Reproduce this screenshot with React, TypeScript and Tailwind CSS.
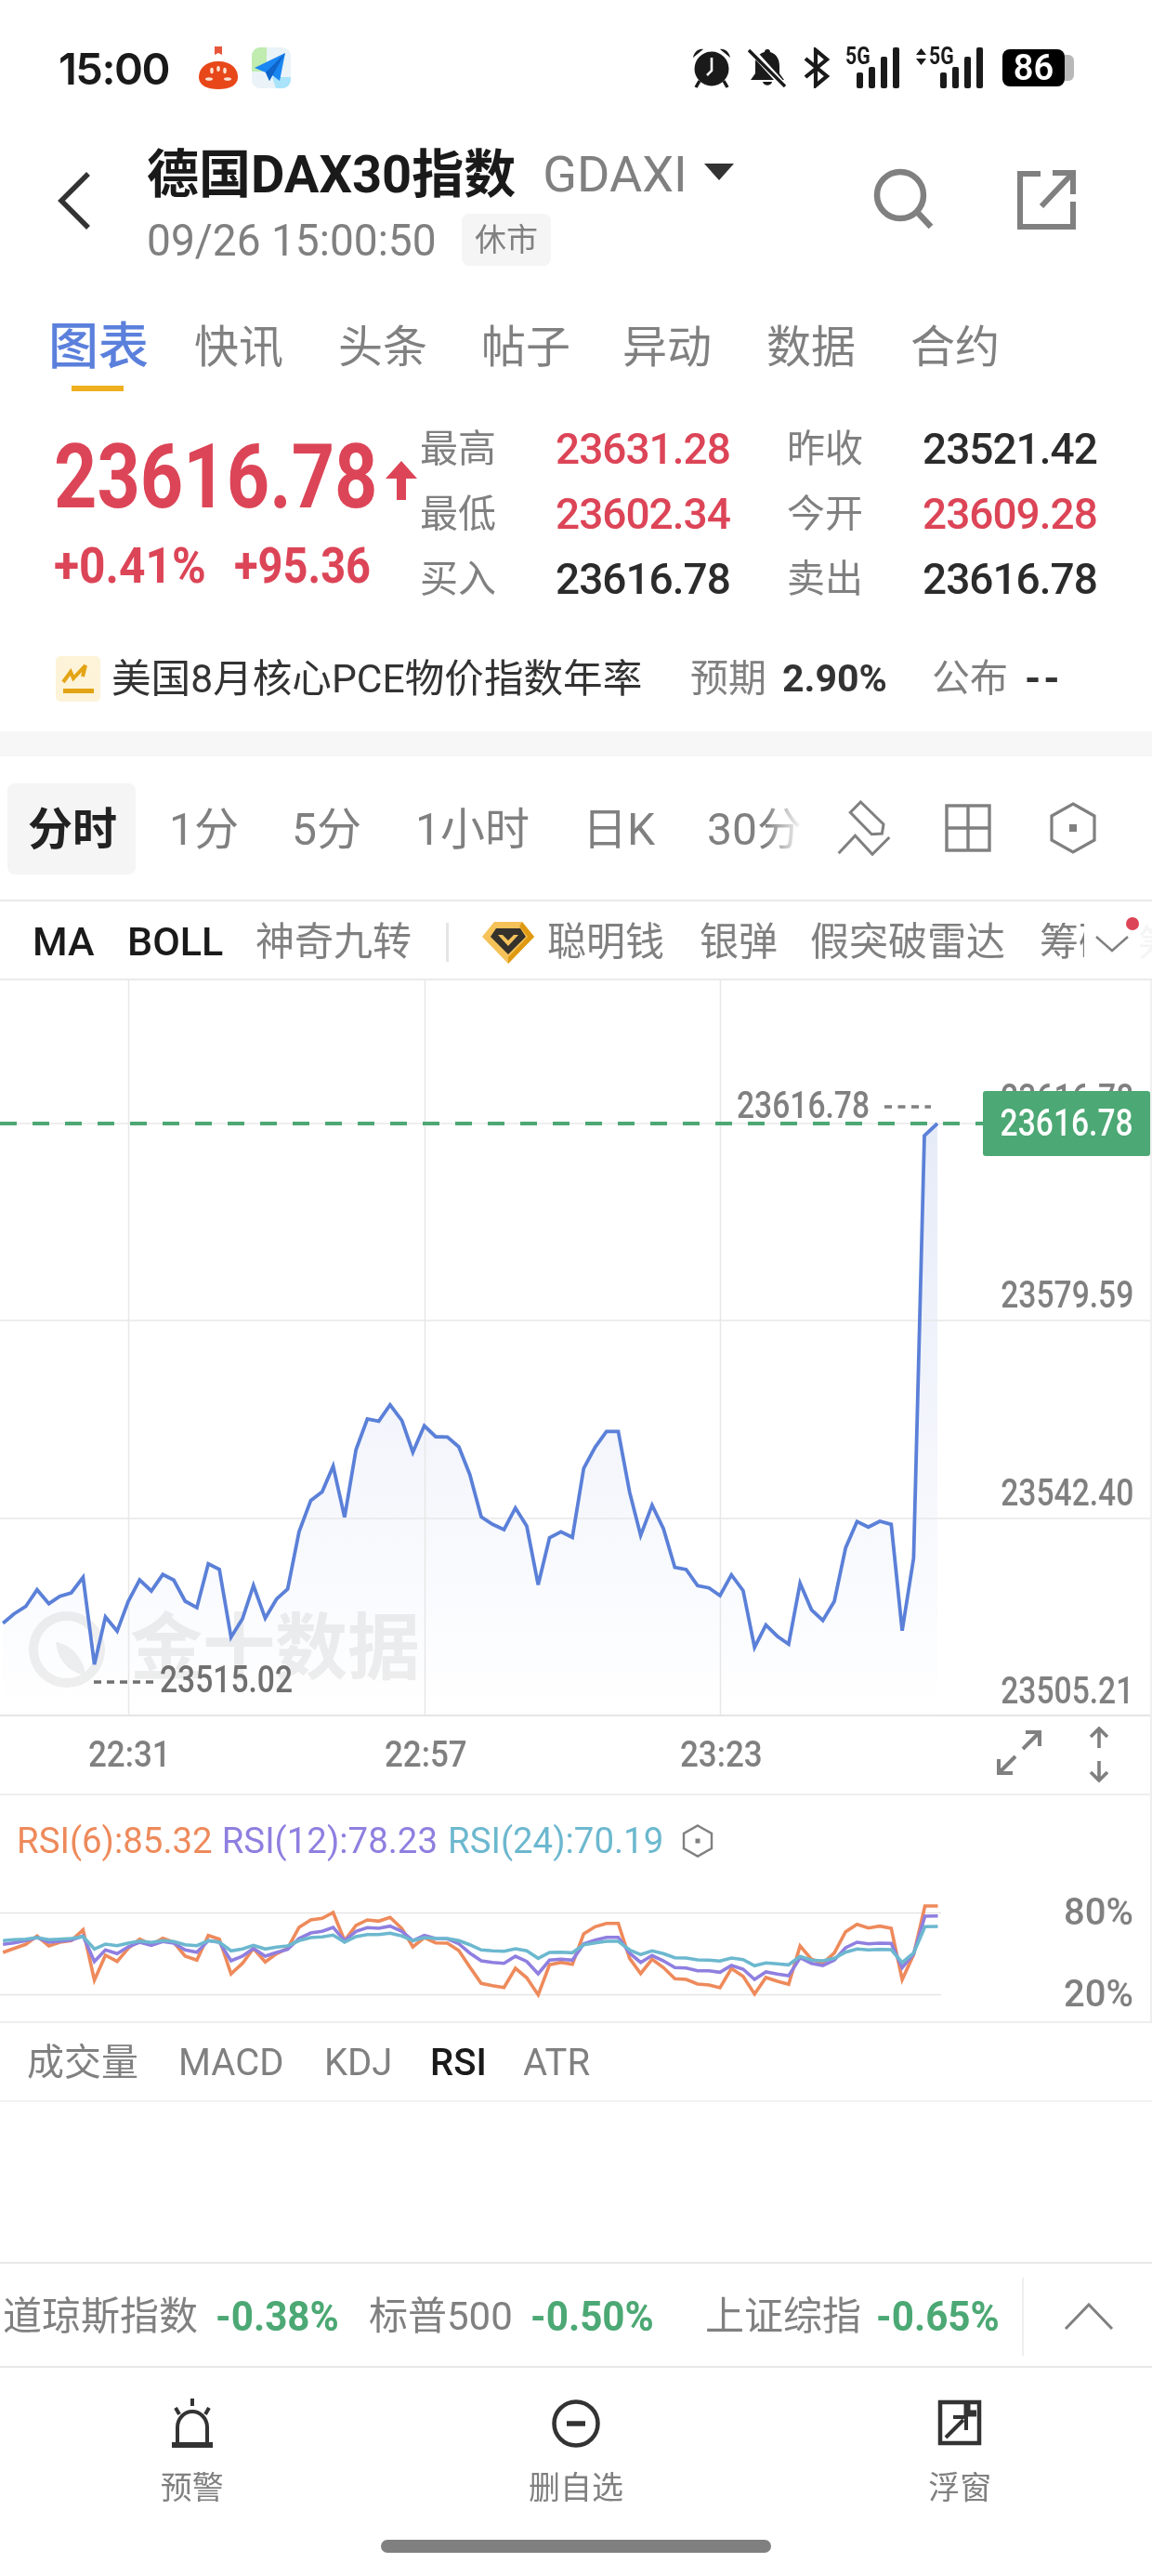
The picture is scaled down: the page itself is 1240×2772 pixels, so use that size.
import React from "react";

const P1: [number, number][] = [[8,860],[38,830],[70,806],[101,752],[133,797],[163,773],[194,762],[226,712],[257,993],[287,840],[319,886],[349,790],[380,720],[412,756],[443,703],[473,721],[504,789],[536,810],[567,668],[597,686],[629,905],[660,846],[690,738],[722,844],[753,782],[783,750],[814,565],[846,464],[877,436],[907,353],[938,518],[969,300],[1000,201],[1031,208],[1062,155],[1094,206],[1124,308],[1155,223],[1186,258],[1218,259],[1249,291],[1279,380],[1310,517],[1341,541],[1372,558],[1403,488],[1434,547],[1465,736],[1496,584],[1527,565],[1558,583]];
const P2: [number, number][] = [[21,360],[52,292],[83,241],[115,241],[146,437],[176,577],[207,479],[238,555],[269,680],[300,687],[331,739],[362,746],[392,771],[423,704],[455,755],[486,938],[517,866],[548,902],[579,928],[610,731],[641,817],[672,851],[703,790],[734,617],[765,532],[796,550],[827,531],[858,541],[888,884],[919,650]];
const price: [number, number][] = [
  ...P1.map(([x, y]) => [x / 2.529, 1460 + y / 3] as [number, number]),
  ...P2.map(([x, y]) => [620 + x / 2.529, 1460 + y / 3] as [number, number]),
  [995, 1222],
  [1009, 1209],
];
const xs1 = P1.map((p) => p[0]);
const xs2 = [...P2.map((p) => p[0]), 950, 985];
const series = (a: number[], b: number[]) => [
  ...a.map((y, i) => `${(xs1[i] / 2.529).toFixed(1)},${(1920 + y / 3).toFixed(1)}`),
  ...b.map((y, i) => `${(620 + xs2[i] / 2.529).toFixed(1)},${(1920 + y / 3).toFixed(1)}`),
].join(" ");
const orange = series(
  [543,530,517,490,522,510,505,470,632,552,572,530,500,518,497,510,555,568,488,500,612,578,530,574,547,530,462,438,433,414,505,456,438,442,430,466,525,495,512,513,537,590,643,650,656,594,625,680,583,575,581],
  [483,460,449,449,562,611,565,592,628,630,645,648,657,595,620,677,624,636,646,522,565,578,545,476,452,464,458,465,631,550,393,393]
);
const purple = series(
  [517,512,505,495,510,507,503,490,572,535,547,525,510,520,508,513,535,542,505,510,570,555,530,555,543,533,498,480,475,462,505,475,463,465,458,475,505,488,498,499,515,545,570,575,578,555,572,612,568,565,568],
  [515,503,494,494,545,575,553,570,592,593,602,602,607,585,597,630,606,613,618,560,578,585,568,528,510,515,513,514,592,548,426,425]
);
const teal = series(
  [505,502,500,495,502,500,498,492,532,516,521,513,506,511,505,508,518,521,505,510,538,532,520,532,526,522,505,495,493,487,510,492,485,485,481,490,505,495,498,498,505,518,535,538,539,531,538,562,543,542,544],
  [518,512,507,507,535,550,538,547,560,561,567,568,571,561,566,586,577,580,583,556,568,570,562,542,532,535,533,534,576,545,460,459]
);
const line = price.map(([x, y]) => `${x.toFixed(1)},${y.toFixed(1)}`).join(" ");
const area = `${line} 1009,1846 3,1846`;

function Row({ label, value, red }: { label: string; value: string; red?: boolean }) {
  return (
    <div className="flex items-center">
      <span className="w-[146px] text-[41px] leading-none text-[#808080]">{label}</span>
      <span className={`w-[190px] text-[46px] leading-none font-medium tracking-[-1px] ${red ? "text-[#dc4557]" : "text-[#2b2b2b]"}`}>{value}</span>
    </div>
  );
}

function Alarm() {
  return (
    <svg width="44" height="44" viewBox="0 0 44 44" fill="#1a1a1a">
      <circle cx="22" cy="23" r="18.5" />
      <path d="M2 11 C3 5 8 1 13 2 Z M42 11 C41 5 36 1 31 2 Z" />
      <path d="M9 36 L5 43 M35 36 L39 43" stroke="#1a1a1a" strokeWidth="3.5" />
      <path d="M22 11 V25 L17 30" stroke="#fff" strokeWidth="2.6" fill="none" />
    </svg>
  );
}
function BellOff() {
  return (
    <svg width="42" height="42" viewBox="0 0 42 42" fill="#1a1a1a">
      <path d="M21 1 a3 3 0 0 1 3 3 C31 6 34 12 34 19 V27 L39 34 H3 L8 27 V15 C8 10 13 5 18 4 a3 3 0 0 1 3-3Z" />
      <path d="M16 36 H26 C25 41 17 41 16 36Z" />
      <path d="M2 0 L40 42" stroke="#fff" strokeWidth="7" />
      <path d="M1 2 L40 41" stroke="#1a1a1a" strokeWidth="3.4" />
    </svg>
  );
}
function Bluetooth() {
  return (
    <svg width="28" height="44" viewBox="0 0 28 44" fill="none" stroke="#1a1a1a" strokeWidth="4.2">
      <path d="M2 12 L25 31 L13 41 V3 L25 13 L2 32" />
    </svg>
  );
}
function Signal({ arrows }: { arrows?: boolean }) {
  return (
    <div className="relative h-[44px] w-[58px] shrink-0">
      <svg className="absolute bottom-0 right-0" width="46" height="44" viewBox="0 0 46 44" fill="#1a1a1a">
        <rect x="0" y="27" width="7" height="17" rx="2" />
        <rect x="13" y="21" width="7" height="23" rx="2" />
        <rect x="26" y="10" width="7" height="34" rx="2" />
        <rect x="39" y="0" width="7" height="44" rx="2" />
      </svg>
      <span className="absolute left-0 top-[-3px] origin-left scale-x-[0.85] text-[25px] leading-[26px] font-bold text-[#1a1a1a]">5G</span>
      {arrows && (
        <svg className="absolute left-[-14px] top-[1px]" width="11" height="18" viewBox="0 0 11 18" fill="#1a1a1a">
          <path d="M5.5 0 L11 7 H0Z M0 11 H11 L5.5 18Z" />
        </svg>
      )}
    </div>
  );
}
function Tomato() {
  return (
    <svg width="44" height="46" viewBox="0 0 44 46">
      <path d="M18 0 H26 V9 L22 7 L18 9Z" fill="#e8573a" />
      <path d="M22 16 C36 16 43 24 43 33 C43 42 34 46 22 46 C10 46 1 42 1 33 C1 24 8 16 22 16Z" fill="#e8471a" />
      <g fill="#fde3d4">
        <ellipse cx="12" cy="35" rx="4" ry="1.8" />
        <ellipse cx="32" cy="35" rx="4" ry="1.8" />
        <ellipse cx="15" cy="26" rx="1.8" ry="3.2" />
        <ellipse cx="29" cy="26" rx="1.8" ry="3.2" />
        <ellipse cx="22" cy="24" rx="1.8" ry="3" />
      </g>
    </svg>
  );
}
function NavApp() {
  return (
    <svg width="42" height="44" viewBox="0 0 42 44">
      <rect x="0" y="0" width="42" height="44" rx="9" fill="#eaf3f7" />
      <path d="M0 9 a9 9 0 0 1 9-9 H16 V26 H0Z" fill="#c0ecb0" />
      <path d="M22 32 H42 V35 a9 9 0 0 1-9 9 H26Z" fill="#a9e4fb" />
      <path d="M36 6 L3 22 L15 27 L19 36 L22 30 L30 36Z" fill="#1a86f2" />
      <path d="M36 6 L15 27 L19 36 Z" fill="#0f63c9" />
    </svg>
  );
}

function ChevronBack() {
  return (
    <svg width="40" height="64" viewBox="0 0 40 64" fill="none" stroke="#333" strokeWidth="5.5">
      <path d="M35 3 L6 32 L35 61" />
    </svg>
  );
}

export default function App() {
  return (
    <div className="relative flex h-[2772px] w-[1240px] flex-col overflow-hidden bg-white font-['Roboto','Noto_Sans_CJK_SC',sans-serif] text-[#808080]">
      {/* status bar */}
      <div className="flex h-[146px] shrink-0 items-center pl-[63px] pr-[94px]">
        <span className="w-[150px] font-['Inter',sans-serif] text-[47px] leading-none font-semibold tracking-[-1.5px] text-[#1a1a1a]">15:00</span>
        <Tomato />
        <span className="ml-[14px]"><NavApp /></span>
        <div className="ml-auto flex items-center">
          <Alarm />
          <span className="ml-[17px]"><BellOff /></span>
          <span className="ml-[18px]"><Bluetooth /></span>
          <span className="ml-[17px]"><Signal /></span>
          <span className="ml-[32px]"><Signal arrows /></span>
          <div className="relative ml-[21px] flex h-[40px] w-[67px] items-center justify-center rounded-[8px] bg-black text-[38px] leading-none font-semibold text-white">
            86
            <span className="absolute right-[-10px] top-[6px] h-[28px] w-[10px] rounded-r-[6px] bg-[#b8b8b8]"></span>
          </div>
        </div>
      </div>

      {/* header */}
      <div className="relative flex h-[164px] shrink-0 pl-[60px]">
        <div className="mt-[38px] w-[98px] shrink-0"><ChevronBack /></div>
        <div className="flex flex-col">
          <div className="flex h-[80px] items-center pt-[3px]">
            <span className="text-[56px] leading-none font-bold text-[#1a1a1a]">德国DAX30指数</span>
            <span className="ml-[29px] text-[54px] leading-none text-[#808080]">GDAXI</span>
            <svg className="ml-[18px] mb-[6px]" width="32" height="18" viewBox="0 0 32 18" fill="#333"><path d="M0 0 H32 L16 18Z" /></svg>
          </div>
          <div className="flex h-[64px] items-center">
            <span className="w-[312px] origin-left scale-x-[0.94] whitespace-nowrap text-[49px] leading-none">09/26 15:00:50</span>
            <span className="ml-[27px] flex h-[56px] w-[96px] items-center justify-center rounded-[8px] bg-[#f5f5f5] text-[34px] leading-none">休市</span>
          </div>
        </div>
        <div className="ml-auto mr-[80px] mt-[35px] flex items-start">
          <svg width="66" height="66" viewBox="0 0 66 66" fill="none" stroke="#808080" strokeWidth="6.5">
            <circle cx="30" cy="29" r="25" />
            <path d="M48 47 L63 63" />
          </svg>
          <svg className="ml-[89px]" width="66" height="66" viewBox="0 0 66 66" fill="none" stroke="#808080" strokeWidth="6">
            <path d="M26 6 H4 V63 H61 V36" />
            <path d="M39 5 H61 V28" />
            <path d="M60 6 L27 41" />
          </svg>
        </div>
      </div>

      {/* tabs */}
      <div className="relative flex h-[124px] shrink-0 items-center pl-[52px] pt-[3px] text-[48px] leading-none text-[#808080]">
        <span className="w-[157px] text-[54px] font-medium text-[#5b80dc]">图表</span>
        <span className="w-[155px]">快讯</span>
        <span className="w-[154px]">头条</span>
        <span className="w-[152px]">帖子</span>
        <span className="w-[155px]">异动</span>
        <span className="w-[155px]">数据</span>
        <span>合约</span>
        <span className="absolute bottom-[13px] left-[77px] h-[6px] w-[56px] bg-[#efaf1e]"></span>
      </div>

      {/* quote */}
      <div className="flex h-[256px] shrink-0 pl-[58px] pt-[14px]">
        <div className="w-[394px] shrink-0">
          <div className="flex h-[130px] items-center">
            <span className="w-[347px] origin-left scale-x-[0.843] whitespace-nowrap text-[96px] leading-none font-bold text-[#dc4557]">23616.78</span>
            <svg className="ml-[10px] mt-[8px]" width="34" height="42" viewBox="0 0 34 42" fill="#dc4557"><path d="M17 0 L34 19 H22 V42 H12 V19 H0Z" /></svg>
          </div>
          <div className="flex h-[62px] items-center text-[54px] leading-none font-bold text-[#dc4557]">
            <span className="w-[194px] origin-left scale-x-[0.92] whitespace-nowrap">+0.41%</span>
            <span className="w-[148px] origin-left scale-x-[0.87] whitespace-nowrap">+95.36</span>
          </div>
        </div>
        <div className="grid h-[210px] grid-cols-[395px_336px] grid-rows-3 items-center">
          <Row label="最高" value="23631.28" red />
          <Row label="昨收" value="23521.42" />
          <Row label="最低" value="23602.34" red />
          <Row label="今开" value="23609.28" red />
          <Row label="买入" value="23616.78" />
          <Row label="卖出" value="23616.78" />
        </div>
      </div>

      {/* event */}
      <div className="flex h-[80px] shrink-0 items-center pl-[60px] text-[41px] leading-none">
        <svg className="mr-[12px]" width="48" height="49" viewBox="0 0 48 49">
          <rect width="48" height="49" rx="5" fill="#fdf3d8" />
          <path d="M8 28 L16 17 L19 24 L32 10 L29 22" fill="none" stroke="#e3a313" strokeWidth="4" />
          <rect x="8" y="35" width="33" height="5" fill="#e3a313" />
        </svg>
        <span className="w-[623px] text-[42.6px] text-[#333]">美国8月核心PCE物价指数年率</span>
        <span className="w-[99px]">预期</span>
        <span className="w-[161px] text-[41px] font-bold text-[#333]">2.90%</span>
        <span className="w-[100px]">公布</span>
        <span className="text-[44px] font-bold tracking-[3px] text-[#333]">--</span>
      </div>
      <div className="h-[17px] shrink-0"></div>
      <div className="h-[27px] shrink-0 bg-[#f7f7f7]"></div>

      {/* periods */}
      <div className="relative flex h-[156px] shrink-0 items-center border-b-2 border-[#eaeaea] pl-[30px] pt-[4px] text-[48px] leading-none">
        <span className="absolute left-[8px] top-[29px] h-[98px] w-[138px] rounded-[8px] bg-[#f5f5f5]"></span>
        <span className="relative w-[152px] font-bold text-[#222]">分时</span>
        <span className="w-[132px]">1分</span>
        <span className="w-[133px]">5分</span>
        <span className="w-[180px]">1小时</span>
        <span className="w-[134px]">日K</span>
        <span className="relative w-[103px] overflow-hidden whitespace-nowrap">
          30分
          <span className="absolute bottom-0 right-0 top-0 w-[40px] bg-gradient-to-r from-transparent to-white"></span>
        </span>
        <svg className="ml-[37px] mb-[4px]" width="58" height="60" viewBox="903 860 58 60" fill="none" stroke="#808080" strokeWidth="3">
          <path d="M928.4 862 L953 886 L951.4 896 L940.3 896.7 L917.3 873.3Z" />
          <path d="M904.7 917.3 L922.5 898.3 L941 918.3 L959.3 900" />
        </svg>
        <svg className="ml-[58px] mb-[4px]" width="50" height="52" viewBox="0 0 50 52" fill="none" stroke="#808080" strokeWidth="3.4">
          <rect x="2" y="2" width="46" height="48" />
          <path d="M25 2 V50 M2 26 H48" />
        </svg>
        <svg className="ml-[63px] mb-[4px]" width="50" height="56" viewBox="0 0 50 56" fill="none" stroke="#808080" strokeWidth="3.2">
          <path d="M25 2 L48 15 V41 L25 54 L2 41 V15Z" />
          <rect x="21" y="24" width="8" height="8" fill="#808080" stroke="none" />
        </svg>
      </div>

      {/* indicators */}
      <div className="relative flex h-[85px] shrink-0 items-center overflow-hidden border-b-2 border-[#eaeaea] pl-[35px] pt-[4px] text-[42px] leading-none">
        <span className="w-[102px] text-[43px] font-medium text-[#1a1a1a]">MA</span>
        <span className="w-[138px] text-[43px] font-medium text-[#1a1a1a]">BOLL</span>
        <span className="w-[205px]">神奇九转</span>
        <span className="h-[42px] w-[3px] bg-[#e5e5e5]"></span>
        <svg className="ml-[36px]" width="56" height="46" viewBox="0 0 56 46">
          <path d="M13 1 H43 L56 17 L28 46 L0 17Z" fill="#f5c25a" />
          <path d="M28 46 L56 17 L43 1 L40 6 L49 17 L28 39Z" fill="#df9a12" />
          <path d="M15 8 H41 L47 17 L28 36 L9 17Z" fill="#35322c" />
          <path d="M17 15 L28 27 L39 15 L34 15 L28 21 L22 15Z" fill="#f5c25a" />
        </svg>
        <span className="ml-[14px] w-[164px]">聪明钱</span>
        <span className="w-[119px]">银弹</span>
        <span className="w-[247px]">假突破雷达</span>
        <span className="w-[48px] overflow-hidden whitespace-nowrap">筹码</span>
        <svg className="ml-[12px] mt-[4px]" width="36" height="18" viewBox="0 0 36 18" fill="none" stroke="#808080" strokeWidth="2.5"><path d="M1 1 L18 16 L35 1" /></svg>
        <span className="absolute left-[1225px] top-[26px] text-[#f5f5f5]">筹</span>
        <span className="absolute left-[1212px] top-[17px] h-[14px] w-[14px] rounded-full bg-[#dc4557]"></span>
      </div>

      {/* main chart */}
      <div className="relative h-[792px] shrink-0 border-r-2 border-[#f0f0f0]">
        <div className="absolute left-[30px] top-[678px] flex items-center">
          <svg width="86" height="84" viewBox="0 0 86 84" fill="none">
            <circle cx="42" cy="42" r="36" stroke="#efefef" strokeWidth="10" />
            <path d="M30 34 C45 36 60 50 62 70 C42 66 32 52 30 34Z" fill="#efefef" />
          </svg>
          <span className="ml-[24px] text-[78px] leading-none font-bold text-[#eeeeee]">金十数据</span>
        </div>
        <svg className="absolute inset-0" width="1238" height="792" viewBox="0 1055 1238 792">
          <defs>
            <linearGradient id="fillG" gradientUnits="userSpaceOnUse" x1="0" y1="1209" x2="0" y2="1846">
              <stop offset="0" stopColor="#e6ebf8" />
              <stop offset="1" stopColor="#ffffff" />
            </linearGradient>
          </defs>
          <polygon points={area} fill="url(#fillG)" className="mix-blend-multiply" />
          <g stroke="#e8e8e8" strokeWidth="1.5">
            <path d="M138.5 1055 V1846 M457.5 1055 V1846 M775.5 1055 V1846" />
            <path d="M0 1421 H1238 M0 1634 H1238" />
          </g>
          <path d="M0 1846 H1238" stroke="#e5e5e5" strokeWidth="2" />
          <path d="M0 1209 H1058" stroke="#e8e8e8" strokeWidth="1.5" />
          <path d="M0 1209 H1058" stroke="#4ca874" strokeWidth="4" strokeDasharray="18 17" />
          <polyline points={line} fill="none" stroke="#5b80d8" strokeWidth="3.8" strokeLinejoin="miter" />
          <path d="M952 1191 H1002" stroke="#808080" strokeWidth="3.5" strokeDasharray="8 6.5" />
          <path d="M101 1810 H165" stroke="#707070" strokeWidth="3.5" strokeDasharray="8 6" />
        </svg>
        <span className="absolute right-[18px] top-[107px] origin-right scale-x-[0.84] whitespace-nowrap text-[40px] leading-none font-medium">23616.78</span>
        <div className="absolute left-[1058px] top-[119px] flex h-[70px] w-[180px] items-center justify-center rounded-[3px] bg-[#4ca874] text-[40px] leading-none font-medium text-white">
          <span className="scale-x-[0.84] whitespace-nowrap">23616.78</span>
        </div>
        <span className="absolute left-[793px] top-[115px] origin-left scale-x-[0.84] whitespace-nowrap text-[40px] leading-none font-medium">23616.78</span>
        <span className="absolute right-[18px] top-[319px] origin-right scale-x-[0.84] whitespace-nowrap text-[40px] leading-none font-medium">23579.59</span>
        <span className="absolute right-[18px] top-[532px] origin-right scale-x-[0.84] whitespace-nowrap text-[40px] leading-none font-medium">23542.40</span>
        <span className="absolute right-[18px] top-[745px] origin-right scale-x-[0.84] whitespace-nowrap text-[40px] leading-none font-medium">23505.21</span>
        <span className="absolute left-[172px] top-[733px] origin-left scale-x-[0.84] whitespace-nowrap text-[40px] leading-none font-medium text-[#707070]">23515.02</span>
      </div>

      {/* x axis */}
      <div className="relative flex h-[85px] shrink-0 items-center border-b-2 border-r-2 border-[#eeeeee] pb-[2px] text-[38px] leading-none font-medium">
        <span className="ml-[95px] w-[319px] origin-left scale-x-[0.92]">22:31</span>
        <span className="w-[318px] origin-left scale-x-[0.92]">22:57</span>
        <span className="origin-left scale-x-[0.92]">23:23</span>
        <svg className="absolute left-[1072px] top-[14px]" width="50" height="50" viewBox="0 0 50 50" fill="none" stroke="#808080" strokeWidth="4">
          <path d="M29 21 L47 3 M32 3 H47 V18" />
          <path d="M21 29 L3 47 M3 32 V47 H18" />
        </svg>
        <svg className="absolute left-[1172px] top-[11px]" width="22" height="60" viewBox="0 0 22 60" fill="none" stroke="#808080" strokeWidth="3.6">
          <path d="M11 2 V23 M2 11 L11 2 L20 11" />
          <path d="M11 37 V58 M2 49 L11 58 L20 49" />
        </svg>
      </div>

      {/* rsi */}
      <div className="relative h-[245px] shrink-0 border-b-2 border-r-2 border-[#eeeeee]">
        <div className="flex h-[98px] items-center pl-[18px] text-[38.4px] leading-none">
          <span className="text-[#ee8a5b]">RSI(6):85.32</span>
          <span className="ml-[10px] text-[#8f7fe0]">RSI(12):78.23</span>
          <span className="ml-[11px] text-[#6cb8cf]">RSI(24):70.19</span>
          <svg className="ml-[20px]" width="34" height="36" viewBox="0 0 34 36" fill="none" stroke="#808080" strokeWidth="2.4">
            <path d="M17 1.5 L32 10 V26 L17 34.5 L2 26 V10Z" />
            <rect x="14.5" y="15.5" width="5" height="5" fill="#808080" stroke="none" />
          </svg>
        </div>
        <svg className="absolute inset-0" width="1238" height="243" viewBox="0 1932 1238 243" fill="none">
          <path d="M0 2058.5 H1013 M0 2146.5 H1013" stroke="#e5e5e5" strokeWidth="1.5" />
          <polyline points={orange} stroke="#ee8a5b" strokeWidth="3.6" />
          <polyline points={purple} stroke="#8f7fe0" strokeWidth="3.6" />
          <polyline points={teal} stroke="#6cb8cf" strokeWidth="3.6" />
        </svg>
        <span className="absolute right-[18px] top-[106px] text-[40px] leading-none font-medium">80%</span>
        <span className="absolute right-[18px] top-[194px] text-[40px] leading-none font-medium">20%</span>
      </div>

      {/* indicator tabs */}
      <div className="flex h-[85px] shrink-0 items-center border-b-2 border-[#f2f2f2] pl-[29px] pt-[3px] text-[40px] leading-none">
        <span className="w-[163px]">成交量</span>
        <span className="w-[157px]">MACD</span>
        <span className="w-[114px]">KDJ</span>
        <span className="w-[100px] font-medium text-[#1a1a1a]">RSI</span>
        <span>ATR</span>
      </div>

      <div className="h-[172px] shrink-0"></div>

      {/* ticker */}
      <div className="flex h-[114px] shrink-0 items-center overflow-hidden border-y-2 border-[#e8e8e8] pl-[3px] pt-[4px] text-[42px] leading-none">
        <span className="w-[229px] whitespace-nowrap">道琼斯指数</span>
        <span className="w-[165px] origin-left scale-x-[0.96] text-[44px] font-bold text-[#4ca874]">-0.38%</span>
        <span className="w-[174px] whitespace-nowrap">标普500</span>
        <span className="w-[188px] origin-left scale-x-[0.96] text-[44px] font-bold text-[#4ca874]">-0.50%</span>
        <span className="w-[184px] whitespace-nowrap">上证综指</span>
        <span className="w-[157px] origin-left scale-x-[0.96] text-[44px] font-bold text-[#4ca874]">-0.65%</span>
        <span className="h-[84px] w-[2px] bg-[#eeeeee]"></span>
        <svg className="ml-[43px]" width="54" height="30" viewBox="0 0 54 30" fill="none" stroke="#808080" strokeWidth="3"><path d="M2 28 L27 2 L52 28" /></svg>
      </div>

      {/* bottom nav */}
      <div className="grid shrink-0 grid-cols-3 pt-[33px]">
        <div className="flex flex-col items-center">
          <svg width="48" height="54" viewBox="0 0 48 54" fill="none" stroke="#333" strokeWidth="4">
            <path d="M24 0 V8 M6 10 L10 17 M42 10 L38 17" />
            <path d="M8 48 V31 C8 21 16 14 24 14 C32 14 40 21 40 31 V48" />
            <path d="M2 50 H46" strokeWidth="6" />
          </svg>
          <span className="mt-[25px] text-[34px] leading-none">预警</span>
        </div>
        <div className="flex flex-col items-center">
          <svg width="52" height="54" viewBox="0 0 52 54" fill="none" stroke="#333" strokeWidth="4.5">
            <circle cx="26" cy="27" r="23.5" />
            <path d="M16 27 H36" strokeWidth="5.5" />
          </svg>
          <span className="mt-[25px] text-[34px] leading-none">删自选</span>
        </div>
        <div className="flex flex-col items-center">
          <svg width="48" height="54" viewBox="0 0 48 54" fill="none" stroke="#333" strokeWidth="4.5">
            <rect x="3" y="4" width="42" height="44" />
            <path d="M32 6 V16 H42" strokeWidth="7" />
            <path d="M9 42 L28 23 M17 20 H31 V34" strokeWidth="4" />
          </svg>
          <span className="mt-[25px] text-[34px] leading-none">浮窗</span>
        </div>
      </div>
      <div className="absolute bottom-[25px] left-[410px] h-[14px] w-[420px] rounded-full bg-[#808080]"></div>
    </div>
  );
}
